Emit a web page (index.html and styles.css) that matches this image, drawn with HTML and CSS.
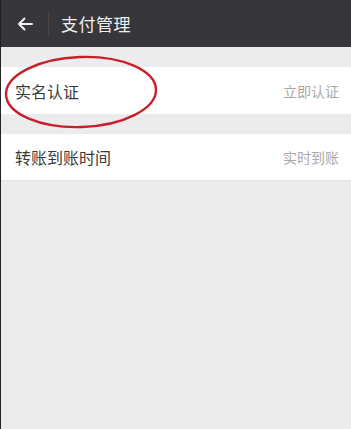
FILE: index.html
```html
<!DOCTYPE html>
<html lang="zh">
<head>
<meta charset="utf-8">
<link rel="stylesheet" href="styles.css">
</head>
<body>
<div class="page">
  <header class="bar">
    <span class="back">
      <svg width="16" height="14" viewBox="0 0 16 14"><path d="M15 7H2M7.5 1.5L2 7l5.5 5.5" fill="none" stroke="#f2f2f2" stroke-width="2" stroke-linecap="round" stroke-linejoin="round"/></svg>
    </span>
    <span class="divider"></span>
    <span class="title">支付管理</span>
  </header>
  <div class="group">
    <div class="row"><span class="label">实名认证</span><span class="value">立即认证</span></div>
  </div>
  <div class="group">
    <div class="row last"><span class="label">转账到账时间</span><span class="value">实时到账</span></div>
  </div>
  <svg class="mark" width="170" height="80" viewBox="0 0 170 80"><ellipse cx="81" cy="38" rx="75" ry="35" fill="none" stroke="#c8202b" stroke-width="2.4" transform="rotate(-2 81 38)"/></svg>
</div>
</body>
</html>
```

FILE: styles.css
```css
html, body { margin: 0; padding: 0; }
body {
  background: #ecebee;
  font-family: "Noto Sans CJK SC", "Noto Sans", sans-serif;
  width: 351px;
  height: 429px;
  overflow: hidden;
}
.page { position: relative; height: 429px; border-left: 1px solid #222; box-sizing: border-box; }
.bar {
  height: 47px;
  background: #37363a;
  display: flex;
  align-items: center;
}
.back { width: 16px; height: 14px; margin-left: 16px; display: flex; }
.divider { width: 1px; height: 22px; background: #4a494d; margin-left: 15px; }
.title { color: #f0f0f0; font-size: 17px; margin-left: 12px; letter-spacing: 0.5px; }
.group { margin-top: 20px; background: #fff; }
.row {
  height: 47px;
  display: flex;
  align-items: center;
  justify-content: space-between;
  padding: 0 12px 0 14px;
}
.row.last { height: 46px; border-bottom: 1px solid #e4e3e6; }
.label { font-size: 16px; color: #3a3a3a; }
.value { font-size: 14px; color: #a9a9a9; }
.mark { position: absolute; left: -1px; top: 54px; }
```
